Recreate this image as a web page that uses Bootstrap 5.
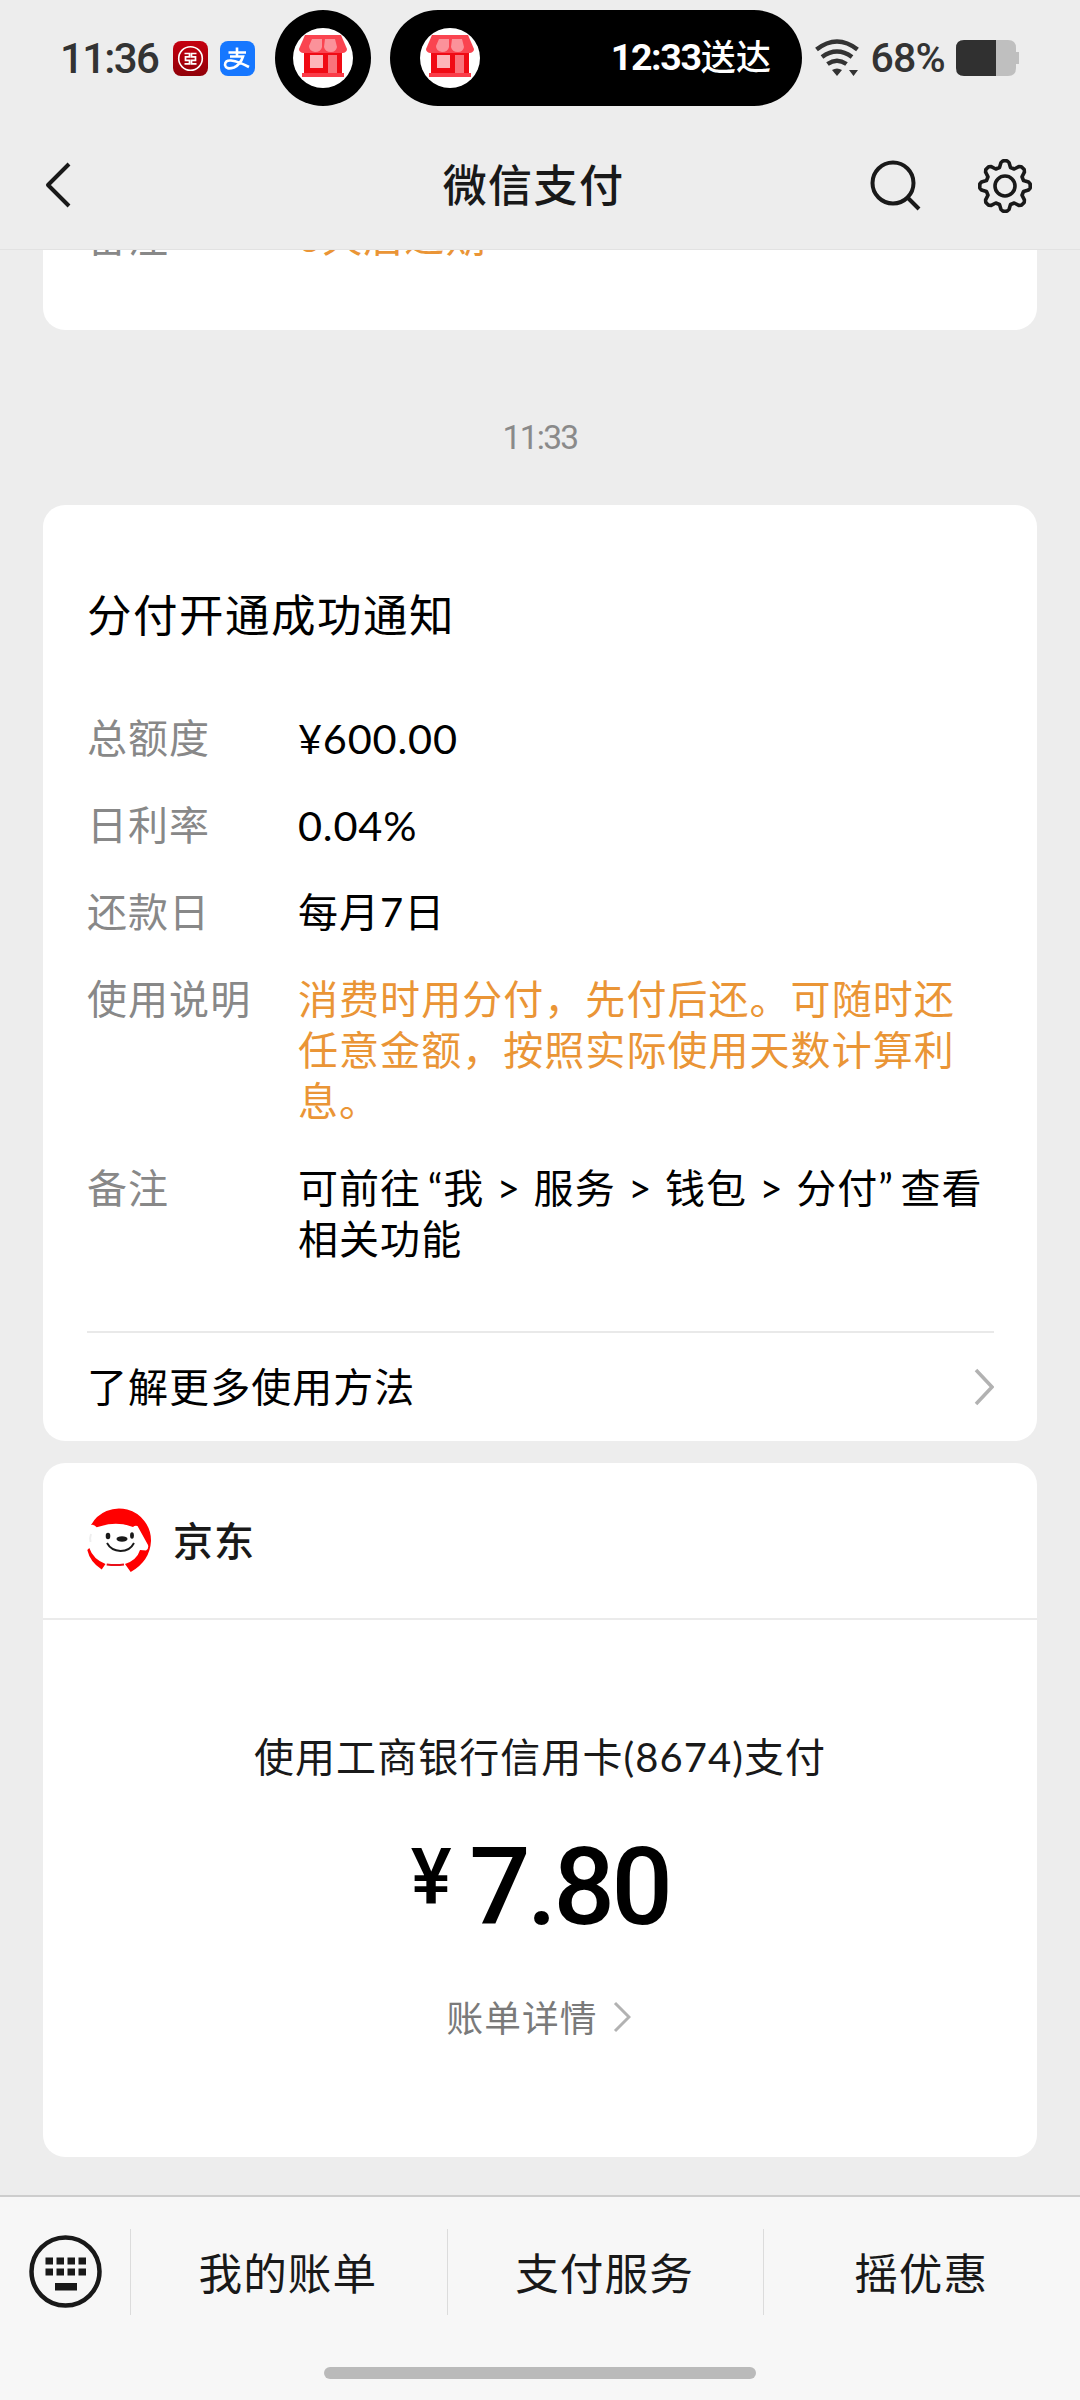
<!DOCTYPE html>
<html lang="zh-CN">
<head>
<meta charset="utf-8">
<meta name="viewport" content="width=device-width, initial-scale=1">
<title>微信支付</title>
<link href="https://cdn.jsdelivr.net/npm/bootstrap@5.3.0/dist/css/bootstrap.min.css" rel="stylesheet">
<style>
  body { background:#ededed; color:#000; font-family:"Noto Sans CJK SC",sans-serif; font-size:40px; letter-spacing:1.05px; line-height:51px; width:1080px; }
  .screen { height:2400px; overflow:hidden; }
  .lat { font-family:Lato,"Noto Sans CJK SC",sans-serif; }
  .num { font-family:Roboto,"Noto Sans CJK SC",sans-serif; }
  svg { display:block; flex:none; }
  .statusbar { height:116px; padding:10px 60px 10px 60px; color:#333; }
  .clock { width:114px; font-size:42px; font-weight:500; letter-spacing:-1.7px; white-space:nowrap; }
  .app-alipay { margin-left:12px; }
  .island { height:96px; background:#000; border-radius:48px; }
  .island-dot { width:96px; margin-left:20px; }
  .island-pill { width:414px; margin-left:19px; padding:0 31px 0 30px; color:#fff; font-size:37.5px; font-weight:700; letter-spacing:-1.3px; white-space:nowrap; }
  .island-pill b { font-size:35px; font-weight:500; letter-spacing:.3px; }
  .wifi { margin-left:13px; }
  .pct { font-size:41px; font-weight:500; letter-spacing:-.8px; margin-left:9px; width:86px; color:#333; }
  .topnav { height:134px; padding:4px 47px 0 45px; border-bottom:1px solid #e2e2e2; color:#191919; }
  .topnav h1 { flex:1; text-align:center; padding-left:127px; padding-bottom:3px; font-size:44px; letter-spacing:1.4px; font-weight:500; line-height:60px; }
  .gear { margin-left:54px; }
  .feed { height:1945px; padding:0 43px; }
  .sheet { background:#fff; border:0; border-radius:22px; }
  .sheet-cut { height:80px; border-top-left-radius:0; border-top-right-radius:0; padding:0 44px; overflow:hidden; }
  .sheet-cut .pair { margin-top:-40px; }
  .stamp { height:175px; padding-top:85px; font-size:33.5px; letter-spacing:-1.7px; line-height:46px; color:#8a8a8a; text-align:center; }
  .notice { height:936px; padding:79px 43px 0 44px; }
  .notice h2 { font-size:44.5px; letter-spacing:1.5px; line-height:58px; margin:0 0 69px; font-weight:400; }
  .pair { display:flex; margin-bottom:36px; }
  .pair dt { width:211px; flex:none; font-weight:400; color:#888; }
  .pair dd { margin:0; flex:1; white-space:nowrap; }
  .pair dd.lat { padding-top:2px; margin-bottom:-2px; }
  .figure-num { font-size:41.5px; letter-spacing:.8px; }
  .quoted { padding:0 6.500px; word-spacing:1.2px; }
  .amber { color:#ea9536; }
  .morelink { border-top:2px solid #e9e9e9; height:110px; }
  .morelink span { padding-bottom:3px; }
  .payment { margin-top:22px; height:694px; }
  .payhead { height:157px; border-bottom:2px solid #ebebeb; padding:0 44px; font-weight:500; color:#191919; }
  .payhead span { margin-left:20px; padding-bottom:3px; }
  .payway { margin-top:112px; color:#191919; }
  .amount { font-family:Roboto,sans-serif; font-weight:500; font-size:108px; line-height:108px; letter-spacing:-3.5px; margin-top:50px; }
  .amount small { font-size:77px; line-height:70px; padding:9px 21px 0 0; }
  .bill { font-size:36.7px; letter-spacing:1px; color:#7a7a7a; margin-top:50px; padding-right:2px; }
  .tabbar { height:205px; background:#f7f7f7; border-top:2px solid #cdcdcd; color:#191919; font-size:43.6px; }
  .tabrow { height:149px; }
  .tabrow > a { color:inherit; text-decoration:none; flex:1; border-left:1px solid #dcdcdc; padding-right:2px; height:86px; }
  .keys { margin:0 28px 0 29px; }
  .homebar { width:432px; height:12px; border-radius:6px; background:#bababa; margin:21px auto 0; }
</style>
</head>
<body>
<svg width="0" height="0" class="position-absolute">
  <symbol id="shop" viewBox="0 0 60 60">
    <circle cx="30" cy="30" r="30" fill="#fff"/>
    <path d="M11 22h38v26H11z" fill="#f00a14"/>
    <path d="M12 7h36l6 14q0 3-4 4H10q-4-1-4-4z" fill="#fa4450"/>
    <path d="M19 11h10v8q-1 5-7 5-6-1-6-6zM32 11h10l2 8q-1 5-6 5-6 0-7-5z" fill="#fb929a"/>
    <rect x="17" y="27" width="13" height="13" fill="#fdb4b8"/>
    <rect x="35" y="27" width="9" height="19" fill="#f9737b"/>
    <rect x="9" y="45" width="42" height="4" fill="#fa3c48"/>
  </symbol>
</svg>
<div class="screen d-flex flex-column">
  <header class="statusbar d-flex align-items-center">
    <span class="clock num">11:36</span>
    <svg width="35" height="35" viewBox="0 0 35 35"><defs><linearGradient id="bankred" x2="0" y2="1"><stop stop-color="#c60010"/><stop offset="1" stop-color="#900008"/></linearGradient></defs><rect width="35" height="35" rx="8" fill="url(#bankred)"/><circle cx="17.500" cy="17.500" r="11.800" fill="none" stroke="#fff" stroke-width="1.600"/><path d="M11.500 12.500h5v3.400h-4v3.500h4v3.400h-5M23.500 12.500h-5v3.400h4v3.500h-4v3.400h5" fill="none" stroke="#fff" stroke-width="1.700"/></svg>
    <svg class="app-alipay" width="35" height="35" viewBox="0 0 35 35"><rect width="35" height="35" rx="8" fill="#1677ff"/><path d="M8.500 11.500h17.500M17 6.500v9M10 15.500h13q-2.500 8-9 11-8 2.500-9-2.500 0-5 6-4.500 8 1 18 6.500" fill="none" stroke="#fff" stroke-width="2.600"/></svg>
    <div class="island island-dot d-flex align-items-center justify-content-center"><svg width="60" height="60"><use href="#shop"/></svg></div>
    <div class="island island-pill d-flex align-items-center justify-content-between"><svg width="60" height="60"><use href="#shop"/></svg><span class="num">12:33<b>送达</b></span></div>
    <svg class="wifi" width="46" height="38" viewBox="0 0 46 38"><g fill="none" stroke="#333" stroke-width="4.500"><path d="M1.500 10.500q20.500-16 41 0M7 18q15-11 30 0M12.500 25q9.500-6.500 19 0"/></g><path d="M17 31q5-3 10 0l-5 6zM34 31h9l-4.500 6z" fill="#333"/></svg>
    <span class="pct num">68%</span>
    <svg width="64" height="36" viewBox="0 0 64 36"><path d="M40 0h12q8 0 8 8v4h3v12h-3v4q0 8-8 8H40z" fill="#bfbfbf"/><path d="M40 0H8Q0 0 0 8v20q0 8 8 8h32z" fill="#303030"/></svg>
  </header>
  <nav class="topnav d-flex align-items-center justify-content-between">
    <svg width="26" height="48" viewBox="0 0 26 48"><path d="M24 3L3 24l21 21" fill="none" stroke="#191919" stroke-width="4" stroke-linejoin="round"/></svg>
    <h1 class="m-0">微信支付</h1>
    <div class="d-flex align-items-center">
      <svg width="52" height="52" viewBox="0 0 52 52"><circle cx="24" cy="24" r="20.500" fill="none" stroke="#191919" stroke-width="4"/><path d="M38.500 38.500L50 50" stroke="#191919" stroke-width="4"/></svg>
      <svg class="gear" width="58" height="58" viewBox="-30 -30 58 58" fill="none" stroke="#191919" stroke-width="3.600" stroke-linejoin="round"><circle r="10"/><path d="M-5.500-18.500L-4-23.500-2-25.200H2L4-23.500 5.500-18.500 9.200-17 13.800-19.400 16.400-19.200 19.200-16.400 19.400-13.800 17-9.200 18.500-5.500 23.500-4 25.200-2V2L23.500 4 18.500 5.500 17 9.200 19.400 13.800 19.200 16.400 16.400 19.200 13.800 19.400 9.200 17 5.500 18.500 4 23.500 2 25.200H-2L-4 23.500-5.500 18.500-9.200 17-13.800 19.400-16.400 19.200-19.200 16.400-19.400 13.800-17 9.200-18.500 5.500-23.500 4-25.200 2V-2L-23.500-4-18.500-5.500-17-9.200-19.400-13.800-19.200-16.400-16.400-19.200-13.800-19.400-9.200-17z"/></svg>
    </div>
  </nav>
  <main class="feed">
    <section class="sheet sheet-cut card"><dl class="pair"><dt>备注</dt><dd class="amber lat">3天后过期</dd></dl></section>
    <div class="stamp num">11:33</div>
    <section class="sheet card notice">
      <h2>分付开通成功通知</h2>
      <dl class="m-0">
        <div class="pair"><dt>总额度</dt><dd class="lat figure-num">¥600.00</dd></div>
        <div class="pair"><dt>日利率</dt><dd class="lat figure-num">0.04%</dd></div>
        <div class="pair"><dt>还款日</dt><dd class="lat">每月7日</dd></div>
        <div class="pair"><dt>使用说明</dt><dd class="amber">消费时用分付，先付后还。可随时还<br>任意金额，按照实际使用天数计算利<br>息。</dd></div>
        <div class="pair"><dt>备注</dt><dd class="lat">可前往<span class="quoted">“我 &gt; 服务 &gt; 钱包 &gt; 分付”</span>查看<br>相关功能</dd></div>
      </dl>
      <div class="morelink d-flex align-items-center justify-content-between mt-auto"><span>了解更多使用方法</span>
        <svg width="20" height="38" viewBox="0 0 20 38"><path d="M2 2l16 17L2 36" fill="none" stroke="#b2b2b2" stroke-width="3.500"/></svg></div>
    </section>
    <section class="sheet card payment">
      <div class="payhead d-flex align-items-center">
        <svg width="66" height="66" viewBox="0 0 66 66"><path d="M4 17A32 32 0 0 1 64 33Q63 53 43.700 64L38 56Q50 52 53 42L59 42.500Q62 41 61 37L50.500 18Q48 17 46 19 29 12.500 9.700 19.300 7 16 4 17zM2.300 40Q6 51 18.500 56L14.700 61.500Q3 54 .3 42z" fill="#f00"/><path d="M19.700 56.500q9 1.200 17.300 0" fill="none" stroke="#e8101a" stroke-width="2"/><g fill="#191919"><ellipse cx="21" cy="28" rx="2.300" ry="3.300"/><ellipse cx="45" cy="27.500" rx="1.900" ry="3.300"/><ellipse cx="35" cy="31" rx="5.500" ry="2.700"/></g><path d="M20 35q4 7.500 13.500 8Q43 43 47 35" fill="none" stroke="#191919" stroke-width="1.900"/><path d="M4 26q-1.500 4-.5 8" fill="none" stroke="#eee" stroke-width="2"/></svg>
        <span>京东</span>
      </div>
      <div class="payway lat text-center">使用工商银行信用卡(8674)支付</div>
      <div class="amount d-flex justify-content-center"><small>¥</small><span>7.80</span></div>
      <div class="bill d-flex align-items-center justify-content-center"><span>账单详情</span><svg class="ms-3" width="18" height="32" viewBox="0 0 18 32"><path d="M2 2l14 14L2 30" fill="none" stroke="#b2b2b2" stroke-width="3"/></svg></div>
    </section>
  </main>
  <footer class="tabbar">
    <div class="tabrow d-flex align-items-center">
      <svg class="keys" width="73" height="73" viewBox="0 0 73 73"><circle cx="36.500" cy="36.500" r="34" fill="none" stroke="#191919" stroke-width="4.500"/><path d="M16.500 26H57M16.500 37H57" stroke="#191919" stroke-width="7" stroke-dasharray="7.500 3.500"/><rect x="26" y="48" width="22" height="7.500" fill="#191919"/></svg>
      <a class="d-flex align-items-center justify-content-center" href="#">我的账单</a>
      <a class="d-flex align-items-center justify-content-center" href="#">支付服务</a>
      <a class="d-flex align-items-center justify-content-center" href="#">摇优惠</a>
    </div>
    <div class="homebar"></div>
  </footer>
</div>
<script src="https://cdn.jsdelivr.net/npm/bootstrap@5.3.0/dist/js/bootstrap.bundle.min.js"></script>
</body>
</html>
